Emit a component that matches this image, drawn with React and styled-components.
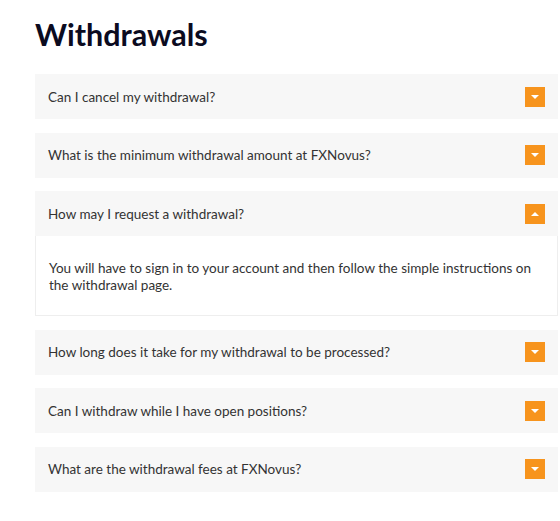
import React, {useState} from 'react'
import styled, {createGlobalStyle} from 'styled-components'

const GlobalStyle = createGlobalStyle`
  body {
    margin: 0;
    background: #fff;
    font-family: "Source Sans Pro", Lato, "Open Sans", sans-serif;
  }
`

const Page = styled.div`
  padding: 16px 2px 20px 35px;
`

const Title = styled.h1`
  margin: 0 0 21px;
  font-size: 30.5px;
  line-height: 37px;
  font-weight: 700;
  color: #0b0b1f;
`

const List = styled.div`
  display: flex;
  flex-direction: column;
  gap: 13.6px;
`

const Item = styled.div`
  display: flex;
  flex-direction: column;
`

const Header = styled.div`
  display: flex;
  align-items: center;
  justify-content: space-between;
  height: 45px;
  padding: 0 13px;
  background: #f7f7f7;
  color: #333;
  font-size: 13.5px;
  cursor: pointer;
`

const Toggle = styled.span`
  display: flex;
  align-items: center;
  justify-content: center;
  width: 20px;
  height: 20px;
  background: #f7941d;

  &::after {
    content: '';
    border-left: 4.5px solid transparent;
    border-right: 4.5px solid transparent;
    ${props => props.open
      ? 'border-bottom: 4.5px solid #fff;'
      : 'border-top: 4.5px solid #fff;'}
  }
`

const Body = styled.div`
  padding: 24px 12px 21px 13px;
  border: 1px solid #eee;
  border-top: none;
  color: #333;
  font-size: 13.5px;
  line-height: 17px;
`

const faqs = [
  {q: 'Can I cancel my withdrawal?'},
  {q: 'What is the minimum withdrawal amount at FXNovus?'},
  {q: 'How may I request a withdrawal?', a: 'You will have to sign in to your account and then follow the simple instructions on the withdrawal page.'},
  {q: 'How long does it take for my withdrawal to be processed?'},
  {q: 'Can I withdraw while I have open positions?'},
  {q: 'What are the withdrawal fees at FXNovus?'},
]

export default function App() {
  const [open, setOpen] = useState(2)

  return (
    <Page>
      <GlobalStyle />
      <Title>Withdrawals</Title>
      <List>
        {faqs.map((x, i) => (
          <Item key={i}>
            <Header onClick={() => setOpen(open === i ? -1 : i)}>
              {x.q}
              <Toggle open={open === i} />
            </Header>
            {open === i && <Body>{x.a || ''}</Body>}
          </Item>
        ))}
      </List>
    </Page>
  )
}
